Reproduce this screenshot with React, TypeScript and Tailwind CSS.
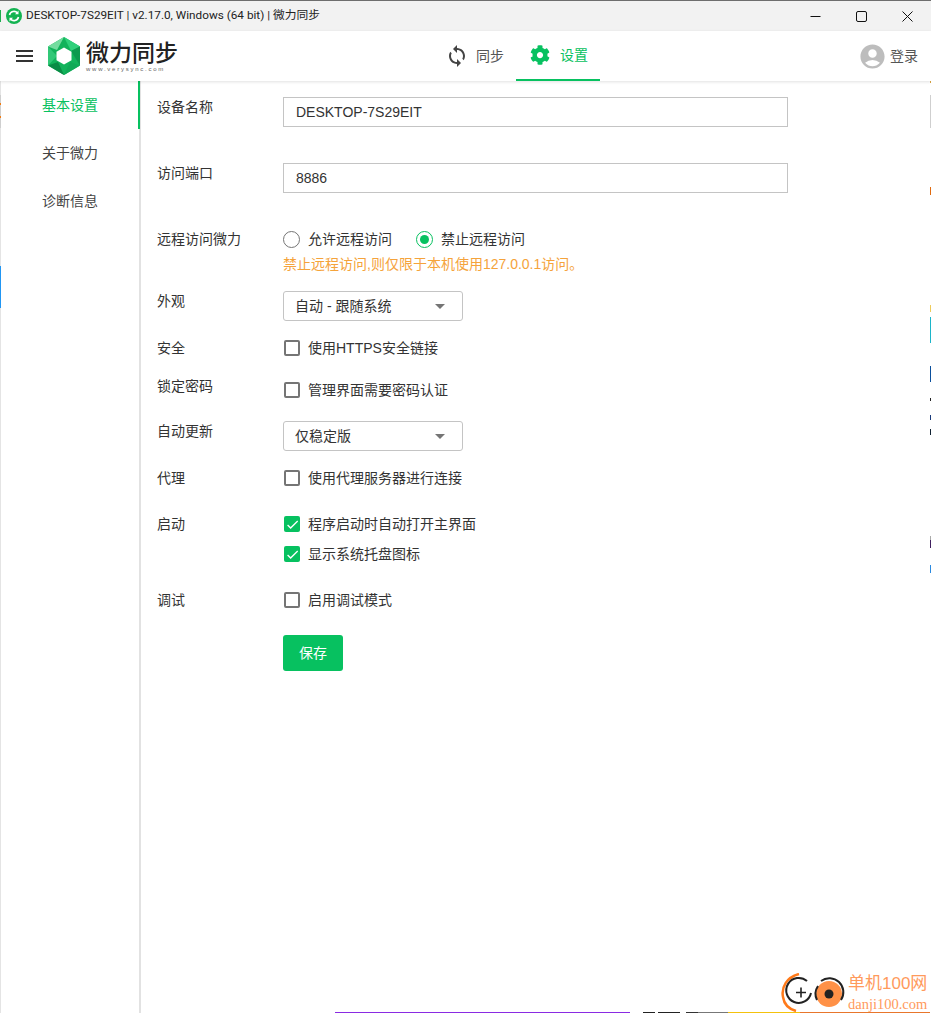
import React from "react";
import { MdSync, MdAccountCircle, MdCheck } from "react-icons/md";
import { FaCog } from "react-icons/fa";

const font = { fontFamily: '"Liberation Sans", "Noto Sans CJK SC", sans-serif' };

const rightEdge: [number, number, string][] = [
  [80, 3, "#d9a441"], [95, 33, "#cfcfcf"], [187, 8, "#e06a10"], [305, 7, "#eecb5b"], [317, 26, "#1cb5c9"],
  [366, 16, "#0b4f9c"], [398, 3, "#222"], [415, 5, "#1a3a7a"], [429, 6, "#123"], [536, 5, "#aaa"], [540, 8, "#402060"], [565, 8, "#2b8ae0"],
];
const leftEdge: [number, number, string][] = [
  [10, 12, "#1fae4f"], [40, 8, "#bbb"], [72, 8, "#2a8fe0"], [95, 33, "#cfcfcf"], [103, 2, "#f07a10"], [116, 2, "#f07a10"], [266, 42, "#2196f3"],
];
const bottomEdge: [number, number, string][] = [
  [335, 295, "#8a2be2"], [643, 12, "#222"], [658, 22, "#222"], [686, 12, "#333"], [698, 30, "#777"], [728, 72, "#f4c20d"], [800, 130, "#e8762c"],
];

function Logo() {
  return (
    <svg width="34" height="38" viewBox="0 0 34 38">
      <polygon points="17,0 33,9.5 33,28.5 17,38 1,28.5 1,9.5" fill="#12b35b" />
      <polygon points="17,0 33,9.5 24,14" fill="#2fd07a" />
      <polygon points="33,9.5 33,28.5 24,14" fill="#0c9a4e" />
      <polygon points="33,28.5 17,38 23,25" fill="#10a957" />
      <polygon points="17,38 1,28.5 11,25" fill="#0a8c46" />
      <polygon points="1,28.5 1,9.5 10,19" fill="#31c877" />
      <polygon points="1,9.5 17,0 10,13" fill="#74dc9f" />
      <polygon points="17,10.5 24.5,14.8 24.5,23.2 17,27.5 9.5,23.2 9.5,14.8" fill="#fff" />
    </svg>
  );
}

function Checkbox({ checked, label }: { checked?: boolean; label: string }) {
  return (
    <label className="flex items-center h-5 pl-px text-[14px] text-[#333]">
      {checked ? (
        <span className="w-4 h-4 rounded-[2px] bg-[#07c160] flex items-center justify-center text-white">
          <MdCheck size={15} />
        </span>
      ) : (
        <span className="w-4 h-4 rounded-[2px] border-2 border-[#757575] bg-white" />
      )}
      <span className="ml-2">{label}</span>
    </label>
  );
}

function Radio({ checked, label }: { checked?: boolean; label: string }) {
  return (
    <label className="flex items-center h-5 text-[14px] text-[#333]">
      <span className={`w-[17px] h-[17px] rounded-full border-[1.5px] flex items-center justify-center ${checked ? "border-[#07c160]" : "border-[#757575]"}`}>
        {checked && <span className="w-[9px] h-[9px] rounded-full bg-[#07c160]" />}
      </span>
      <span className="ml-2">{label}</span>
    </label>
  );
}

function Select({ value }: { value: string }) {
  return (
    <div className="w-[180px] h-[30px] border border-[#c4c4c4] rounded-[3px] flex items-center justify-between pl-[11px] pr-[17px] text-[14px] text-[#333]">
      <span>{value}</span>
      <span className="w-0 h-0 border-l-[5px] border-r-[5px] border-t-[5px] border-l-transparent border-r-transparent border-t-[#757575]" />
    </div>
  );
}

function Row({ label, labelClass = "", className = "", children }: { label: string; labelClass?: string; className?: string; children: React.ReactNode }) {
  return (
    <div className={`flex ${className}`}>
      <div className={`w-[126px] h-5 shrink-0 text-[14px] text-[#333] leading-[21px] ${labelClass}`}>{label}</div>
      <div className="flex-1">{children}</div>
    </div>
  );
}

function Input({ value }: { value: string }) {
  return (
    <div className="w-[505px] h-[30px] border border-[#c4c4c4] flex items-center pl-3 text-[14px] text-[#333]">{value}</div>
  );
}

export default function App() {
  return (
    <div className="relative w-[931px] h-[1013px] overflow-hidden bg-white flex flex-col" style={font}>
      <div className="h-[31px] shrink-0 bg-[#f2f2f2] border-t border-[#6e6e6e] flex items-center pl-[6px]">
        <svg width="16" height="16" viewBox="0 0 16 16">
          <circle cx="8" cy="8" r="8" fill="#13b351" />
          <path d="M3.5 7a4.6 4.6 0 0 1 8-2M12.5 9a4.6 4.6 0 0 1-8 2" fill="none" stroke="#fff" strokeWidth="1.6" />
          <path d="M12.5 2.6v3.6H9zM3.5 13.4V9.8H7z" fill="#fff" />
        </svg>
        <span className="ml-1 text-[11.75px] text-[#222]" style={{ fontFamily: 'Roboto, "Noto Sans CJK SC", sans-serif' }}>
          DESKTOP-7S29EIT | v2.17.0, Windows (64 bit) | 微力同步
        </span>
        <div className="ml-auto mr-px flex items-center text-[#111]">
          <div className="w-[46px] flex justify-center">
            <svg width="11" height="11" viewBox="0 0 11 11"><path d="M0.5 5.5h10" stroke="currentColor" /></svg>
          </div>
          <div className="w-[46px] flex justify-center">
            <svg width="11" height="11" viewBox="0 0 11 11"><rect x="0.5" y="0.5" width="10" height="10" rx="1.5" fill="none" stroke="currentColor" /></svg>
          </div>
          <div className="w-[46px] flex justify-center">
            <svg width="11" height="11" viewBox="0 0 11 11"><path d="M0.5 0.5l10 10M10.5 0.5l-10 10" stroke="currentColor" /></svg>
          </div>
        </div>
      </div>

      <header className="relative z-10 h-[50px] shrink-0 bg-white shadow-[0_1px_3px_rgba(0,0,0,0.12)] flex items-center">
        <div className="ml-4 w-[17px] flex flex-col gap-[3px]">
          <span className="h-[2px] bg-[#333]" />
          <span className="h-[2px] bg-[#333]" />
          <span className="h-[2px] bg-[#333]" />
        </div>
        <div className="ml-[14px]"><Logo /></div>
        <div className="ml-[5px] flex flex-col items-start">
          <span className="text-[23px] leading-[26px] font-medium text-[#222]">微力同步</span>
          <span className="text-[6px] leading-[7px] tracking-[1.75px] text-[#666]">www.verysync.com</span>
        </div>
        <nav className="absolute left-[433px] top-0 h-[50px] flex">
          <div className="w-[83px] pl-[12px] flex items-center text-[14px] text-[#555]">
            <MdSync size={24} className="text-[#444]" />
            <span className="ml-[7px]">同步</span>
          </div>
          <div className="w-[84px] pl-[14px] flex items-center text-[14px] text-[#07c160] border-b-2 border-[#07c160]">
            <FaCog size={20} />
            <span className="ml-[10px]">设置</span>
          </div>
        </nav>
        <div className="ml-auto mr-[13px] flex items-center text-[14px] text-[#555]">
          <MdAccountCircle size={29} className="text-[#bdbdbd]" />
          <span className="ml-[3px]">登录</span>
        </div>
      </header>

      <div className="flex-1 flex min-h-0">
        <aside className="w-[141px] shrink-0 border-r-2 border-[#e2e2e2] border-l border-l-[#e4e4e4] text-[14px] text-[#444]">
          <div className="relative h-[48px] flex items-center pl-[41px] text-[#07c160]">
            基本设置
            <span className="absolute right-[-1px] top-0 w-[2px] h-[48px] bg-[#07c160]" />
          </div>
          <div className="h-[48px] flex items-center pl-[41px]">关于微力</div>
          <div className="h-[48px] flex items-center pl-[41px]">诊断信息</div>
        </aside>
        <main className="flex-1 pl-4 pt-4">
          <Row label="设备名称"><Input value="DESKTOP-7S29EIT" /></Row>
          <Row label="访问端口" className="mt-9"><Input value="8886" /></Row>
          <Row label="远程访问微力" className="mt-9">
            <div className="flex gap-6">
              <Radio label="允许远程访问" />
              <Radio checked label="禁止远程访问" />
            </div>
            <div className="mt-[5px] h-5 text-[14px] leading-5 text-[#f5a33b]">禁止远程访问,则仅限于本机使用127.0.0.1访问。</div>
          </Row>
          <Row label="外观" className="mt-[17px]"><Select value="自动 - 跟随系统" /></Row>
          <Row label="安全" className="mt-[17px]"><Checkbox label="使用HTTPS安全链接" /></Row>
          <Row label="锁定密码" className="mt-[22px]" labelClass="-mt-[4px]"><Checkbox label="管理界面需要密码认证" /></Row>
          <Row label="自动更新" className="mt-[21px]"><Select value="仅稳定版" /></Row>
          <Row label="代理" className="mt-[17px]"><Checkbox label="使用代理服务器进行连接" /></Row>
          <Row label="启动" className="mt-[26px]">
            <div className="flex flex-col gap-[10px]">
              <Checkbox checked label="程序启动时自动打开主界面" />
              <Checkbox checked label="显示系统托盘图标" />
            </div>
          </Row>
          <Row label="调试" className="mt-[26px]"><Checkbox label="启用调试模式" /></Row>
          <div className="ml-[126px] mt-[25px] w-[60px] h-9 rounded-[3px] bg-[#07c160] text-white text-[14px] flex items-center justify-center">保存</div>
        </main>
      </div>

      {/* screenshot-edge slivers */}
      {leftEdge.map(([y, h, c]) => <span key={`l${y}`} className="absolute left-0 w-px" style={{ top: y, height: h, background: c }} />)}
      {rightEdge.map(([y, h, c]) => <span key={`r${y}`} className="absolute right-0 w-px" style={{ top: y, height: h, background: c }} />)}
      {bottomEdge.map(([x, w, c]) => <span key={`b${x}`} className="absolute bottom-0 h-px" style={{ left: x, width: w, background: c }} />)}

      {/* watermark */}
      <div className="absolute left-[781px] top-[973px] flex">
        <svg width="68" height="40" viewBox="0 0 68 40">
          <path d="M18 1C6 4 0 14 2 24c1 7 6 12 13 14" fill="none" stroke="#ff7a1a" strokeWidth="2.5" />
          <path d="M26 8a12.5 12.5 0 1 0 4 12" fill="none" stroke="#222" strokeWidth="2" />
          <path d="M20 14.5v10M15 19.5h10" stroke="#222" strokeWidth="1.6" />
          <circle cx="48" cy="21" r="13" fill="#ff9147" />
          <path d="M40 8a14 14 0 0 1 20 19M37 13a14 14 0 0 0-1 14" fill="none" stroke="#222" strokeWidth="2" />
          <circle cx="48" cy="21" r="4.5" fill="#222" />
        </svg>
      </div>
      <div className="absolute left-[848px] top-[972px] flex flex-col text-[#ff9a5c]">
        <span className="text-[17px] leading-[24px] whitespace-nowrap">单机100网</span>
        <span className="text-[14.5px] leading-[16px] whitespace-nowrap" style={{ fontFamily: '"Liberation Serif", serif' }}>danji100.com</span>
      </div>
    </div>
  );
}
